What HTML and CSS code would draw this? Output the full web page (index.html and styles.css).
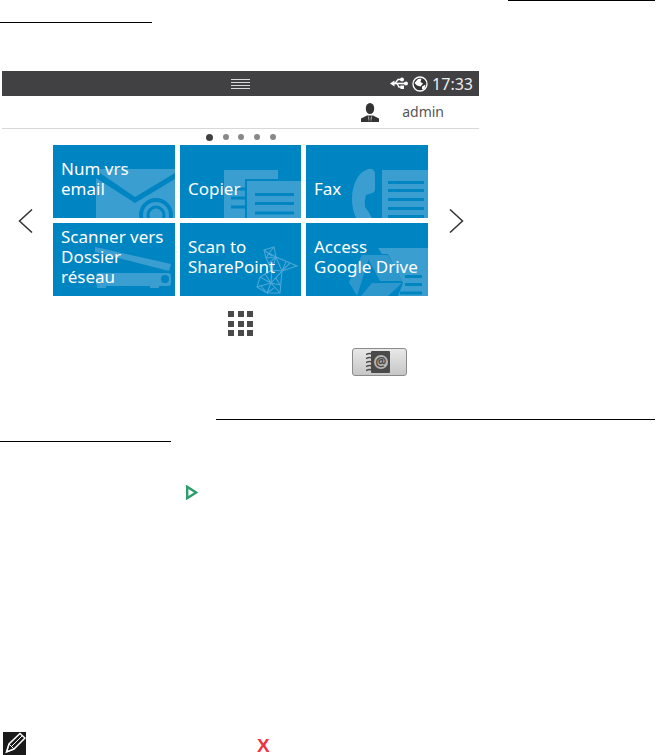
FILE: index.html
```html
<!DOCTYPE html>
<html lang="en">
<head>
    <meta charset="UTF-8">
    <meta name="viewport" content="width=device-width, initial-scale=1.0">
    <title>Printer home screen</title>
    <link rel="stylesheet" href="styles.css">
</head>
<body>
    <div class="page">
        <div class="rule rule-top"></div>
        <div class="rule rule-second"></div>

        <section class="panel">
            <div class="status-bar">
                <svg class="status-handle" width="19" height="10" viewBox="0 0 19 10">
                    <path d="M0 .5H19M0 3.5H19M0 6.5H19M0 9.5H19" stroke="#d9d9d9" stroke-width="1"/>
                </svg>
                <div class="status-icons">
                    <svg width="18" height="13" viewBox="0 0 18 13">
                        <path d="M3 6.500H15" stroke="#fff" stroke-width="1.6"/>
                        <path d="M0 6.500L4.500 3.500V9.500Z" fill="#fff"/>
                        <path d="M5 6.500L8 2.500H11M7 6.500L9 10H11" stroke="#fff" stroke-width="1.4" fill="none"/>
                        <circle cx="12" cy="2.500" r="2" fill="#fff"/>
                        <rect x="10.500" y="8.500" width="3.500" height="3.500" fill="#fff"/>
                        <circle cx="16" cy="6.500" r="2" fill="#fff"/>
                    </svg>
                    <svg width="16" height="16" viewBox="0 0 16 16">
                        <circle cx="8" cy="8" r="7" fill="#333" stroke="#fff" stroke-width="1.3"/>
                        <path d="M2.500 7L6 3L9.500 2.500L8.500 6L11 7.500L8.500 10.500L5 9.500ZM10 10.500L13.500 8.500L12.500 13L10 13.500Z" fill="#fff"/>
                    </svg>
                    <span class="status-time">17:33</span>
                </div>
            </div>

            <div class="user-bar">
                <svg width="18" height="19" viewBox="0 0 18 19">
                    <ellipse cx="9" cy="5.500" rx="4.200" ry="5.500" fill="#333"/>
                    <path d="M0 19V15.500L6 12.500H12L18 15.500V19Z" fill="#333"/>
                    <path d="M7 12.500L9 16L11 12.500L10 19H8Z" fill="#ddd"/>
                    <path d="M8.400 14.500H9.600L10 19H8Z" fill="#333"/>
                </svg>
                <span class="user-name">admin</span>
            </div>

            <div class="page-dots">
                <span class="dot dot-active"></span>
                <span class="dot"></span>
                <span class="dot"></span>
                <span class="dot"></span>
                <span class="dot"></span>
            </div>

            <div class="launcher">
                <svg class="arrow arrow-left" width="15" height="24" viewBox="0 0 15 24">
                    <path d="M14 .5L1.500 12L14 23.500" fill="none" stroke="#333" stroke-width="1.500"/>
                </svg>

                <div class="tiles">
                    <div class="tile">
                        <svg class="tile-art" viewBox="0 0 122 73">
                            <path class="art" d="M47 24H122V28L82 52L47 28Z"/>
                            <path class="art" d="M43 33L82 58L122 34V73H43Z"/>
                            <circle cx="103" cy="70" r="15" fill="none" stroke="#0085c3" stroke-width="4"/>
                            <circle cx="103" cy="70" r="8" fill="none" stroke="#0085c3" stroke-width="3"/>
                        </svg>
                        <span class="tile-label">Num vrs<br>email</span>
                    </div>
                    <div class="tile tile-low">
                        <svg class="tile-art" viewBox="0 0 121 73">
                            <rect class="art" x="44" y="25" width="54" height="48"/>
                            <path d="M51 44H65M51 53H65M51 62H65" stroke="#0085c3" stroke-width="3"/>
                            <rect x="65" y="34" width="56" height="39" fill="#0085c3"/>
                            <rect class="art" x="67" y="36" width="54" height="37"/>
                            <path d="M75 49.500H114M75 58.500H114M75 68H114" stroke="#0085c3" stroke-width="3"/>
                        </svg>
                        <span class="tile-label">Copier</span>
                    </div>
                    <div class="tile tile-low">
                        <svg class="tile-art" viewBox="0 0 122 73">
                            <path class="art" d="M60 25Q64 23 67 24.500Q69 26 69 30V44Q69 47 66 48L60 50Q58 56 59 62L62 66L66 73H50Q46 64 46 54C46 40 52 28 60 25Z"/>
                            <rect class="art" x="76" y="25" width="46" height="48"/>
                            <path d="M82 37.500H118M82 45.500H118M82 54.500H118M82 63.500H118M82 71.500H118" stroke="#0085c3" stroke-width="3"/>
                        </svg>
                        <span class="tile-label">Fax</span>
                    </div>
                    <div class="tile">
                        <svg class="tile-art" viewBox="0 0 122 73">
                            <path class="art" d="M42 24L118 41L116 48L42 29Z"/>
                            <rect class="art" x="43" y="50" width="75" height="13" rx="3"/>
                            <rect class="art" x="44" y="63" width="9" height="2"/>
                            <rect class="art" x="97" y="63" width="9" height="2"/>
                            <circle cx="112" cy="56" r="4" fill="#0085c3"/>
                        </svg>
                        <span class="tile-label">Scanner vers<br>Dossier<br>réseau</span>
                    </div>
                    <div class="tile">
                        <svg class="tile-art" viewBox="0 0 121 73">
                            <path class="mesh" d="M84 27L94 24L96 34L117 43L102 48L100 70L87 70L77 64L80 54L92 47L86 35Z"/>
                            <path class="mesh" d="M86 35L96 34L92 47L102 48M96 34L102 48M106 39L102 48M110 40L102 48M92 47L91 60L100 70M102 48L91 60L80 54M91 60L77 64M91 60L87 70M89 30L96 34M84 27L92 33M86 35L89 30L94 24M88 41L96 34M96 55L102 48M96 55L100 62L91 60M85 51L91 60M85 51L92 47M80 62L87 70M94 65L87 70"/>
                        </svg>
                        <span class="tile-label">Scan to<br>SharePoint</span>
                    </div>
                    <div class="tile">
                        <svg class="tile-art" viewBox="0 0 122 73">
                            <path class="art" d="M72 25H122V73H92L97 60L82 31H76Z"/>
                            <path d="M99 53.500H116M99 61.500H116M94 70H116" stroke="#0085c3" stroke-width="3"/>
                            <path class="art-soft" d="M56 32H64L51 73L43 59Z"/>
                            <path class="art-soft" d="M60 32H82L96 58H74Z"/>
                            <path class="art-soft" d="M66 60H96L82 73H55Z"/>
                        </svg>
                        <span class="tile-label">Access<br>Google Drive</span>
                    </div>
                </div>

                <svg class="arrow arrow-right" width="15" height="24" viewBox="0 0 15 24">
                    <path d="M1 .5L13.500 12L1 23.500" fill="none" stroke="#333" stroke-width="1.500"/>
                </svg>
            </div>

            <div class="apps-grid">
                <span></span><span></span><span></span>
                <span></span><span></span><span></span>
                <span></span><span></span><span></span>
            </div>
        </section>

        <div class="address-btn">
            <svg width="24" height="22" viewBox="0 0 24 22">
                <rect x="5" y="0" width="19" height="22" rx="1" fill="#4a4a4a"/>
                <path d="M0 3.500Q4 1.500 7 3.500M0 7.500Q4 5.500 7 7.500M0 11.500Q4 9.500 7 11.500M0 15.500Q4 13.500 7 15.500M0 19.500Q4 17.500 7 19.500" stroke="#4a4a4a" stroke-width="1.500" fill="none"/>
                <circle cx="15" cy="11" r="7" fill="#b5b5b5"/>
                <text class="btn-at" x="15" y="15" text-anchor="middle">@</text>
            </svg>
        </div>

        <div class="rule rule-third"></div>
        <div class="rule rule-fourth"></div>

        <svg class="play-mark" width="12" height="15" viewBox="0 0 12 15">
            <path d="M1.200 1.800L10 7.500L1.200 13.200Z" fill="none" stroke="#2e9e6b" stroke-width="2.400"/>
        </svg>

        <div class="note-row">
            <svg class="note-icon" width="23" height="23" viewBox="0 0 23 23">
                <rect width="23" height="23" fill="#1a1a1a"/>
                <path d="M3.500 20L6 12L17 1.500L22 6L11 17Z" fill="none" stroke="#fff" stroke-width="1.500"/>
                <path d="M3.500 20L11 17L6 12ZM8.500 14.500L19.500 3.500" fill="none" stroke="#fff" stroke-width="1"/>
            </svg>
            <span class="note-x">X</span>
        </div>
    </div>
</body>
</html>
```

FILE: styles.css
```css
/* Base */
* {
    margin: 0;
    padding: 0;
    box-sizing: border-box;
}

body {
    font-family: "Noto Sans", "Open Sans", sans-serif;
    background: #fff;
    color: #111;
}

.page {
    height: 755px;
    overflow: hidden;
}

/* Document rules */
.rule {
    height: 1px;
    background: #000;
}

.rule-top {
    margin-left: 508px;
    width: 147px;
}

.rule-second {
    margin-top: 21px;
    width: 152px;
}

.rule-third {
    margin-top: 43px;
    margin-left: 216px;
    width: 439px;
}

.rule-fourth {
    margin-top: 21px;
    width: 171px;
}

/* Panel */
.panel {
    margin-top: 48px;
    margin-left: 2px;
    width: 477px;
}

.status-bar {
    position: relative;
    display: flex;
    justify-content: center;
    align-items: center;
    height: 25px;
    background: #414042;
}

.status-icons {
    position: absolute;
    right: 6px;
    top: 0;
    height: 25px;
    display: flex;
    align-items: center;
    gap: 4px;
    color: #eee;
}

.status-time {
    font-size: 16px;
}

.user-bar {
    display: flex;
    justify-content: flex-end;
    align-items: center;
    gap: 23px;
    height: 33px;
    padding-right: 35px;
    border-bottom: 1px solid #d8d8d8;
}

.user-name {
    margin-bottom: 2px;
    font-size: 14px;
    color: #555;
}

.page-dots {
    display: flex;
    align-items: center;
    gap: 9.7px;
    height: 16px;
    padding-left: 204px;
}

.dot {
    width: 6px;
    height: 6px;
    border-radius: 50%;
    background: #888;
}

.dot-active {
    width: 7px;
    height: 7px;
    background: #414042;
}

/* Launcher */
.launcher {
    display: grid;
    grid-template-columns: 51px 375px 51px;
    align-items: center;
}

.arrow-left {
    margin-left: 16px;
}

.arrow-right {
    margin-left: 21px;
}

.tiles {
    display: grid;
    grid-template-columns: 122px 121px 122px;
    grid-auto-rows: 73px;
    gap: 5px;
}

.tile {
    position: relative;
    display: flex;
    align-items: center;
    padding-left: 8px;
    padding-bottom: 5px;
    background: #0085c3;
    color: #fff;
    overflow: hidden;
}

.tile-low {
    padding-top: 20px;
}

.tile-label {
    position: relative;
    font-size: 17px;
    line-height: 20px;
    white-space: nowrap;
}

.tile-art {
    position: absolute;
    left: 0;
    top: 0;
    width: 100%;
    height: 100%;
}

.art {
    fill: #3a9ed1;
}

.art-soft {
    fill: #2e98cd;
}

.mesh {
    fill: none;
    stroke: #4aa6d6;
    stroke-width: 1.1;
}

.apps-grid {
    display: grid;
    grid-template-columns: repeat(3, 6px);
    grid-auto-rows: 6px;
    gap: 3.5px;
    width: 25px;
    margin: 15px auto 0;
}

.apps-grid span {
    background: #4a4a4a;
}

/* Address book button */
.address-btn {
    display: flex;
    justify-content: center;
    align-items: center;
    width: 55px;
    height: 28px;
    margin-top: 12px;
    margin-left: 352px;
    padding-right: 4px;
    border: 1px solid #8a8a8a;
    border-radius: 3px;
    background: linear-gradient(#e8e8e8, #c6c6c6);
}

.btn-at {
    font-size: 12px;
    font-weight: 700;
    fill: #4a4a4a;
}

.play-mark {
    display: block;
    margin-top: 43px;
    margin-left: 186px;
}

/* Note row */
.note-row {
    display: flex;
    align-items: center;
    height: 23px;
    margin-top: 232px;
    padding-left: 3px;
}

.note-x {
    margin-top: 4px;
    margin-left: 231px;
    font-family: "Liberation Sans", sans-serif;
    font-size: 19px;
    font-weight: 700;
    color: #ef3340;
}
```
